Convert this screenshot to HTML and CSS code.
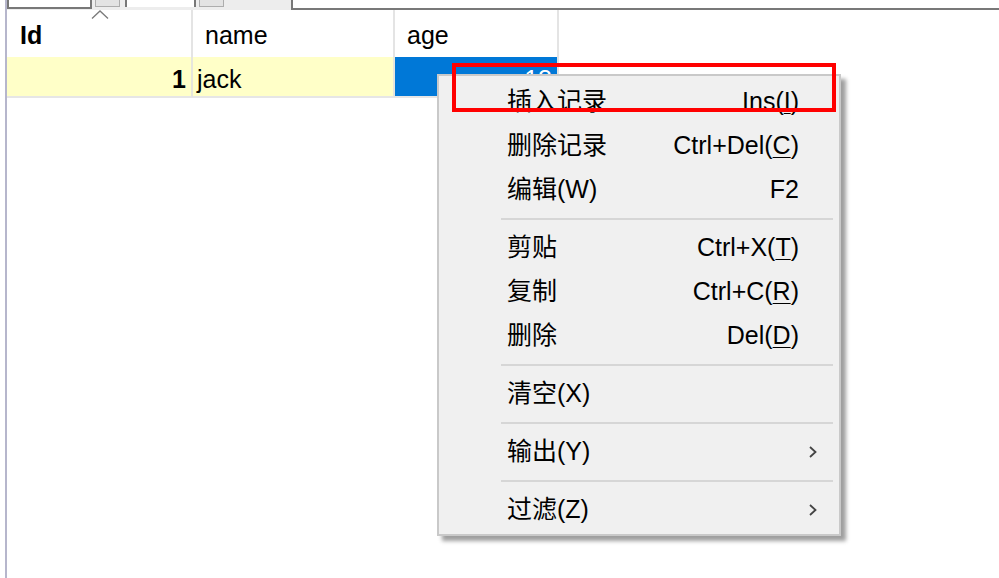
FILE: index.html
```html
<!DOCTYPE html>
<html lang="zh-CN">
<head>
<meta charset="utf-8">
<title>Grid context menu</title>
<link rel="stylesheet" href="styles.css">
</head>
<body>
<div class="screen">
  <div class="edge"></div>
  <div class="main">
    <div class="topbar">
      <div class="field field-a"></div>
      <div class="spin"></div>
      <div class="field field-c"></div>
      <div class="spin spin-d"></div>
      <div class="field field-e"></div>
    </div>
    <div class="table">
      <div class="th th-id"><span class="bold">Id</span>
        <svg class="sort" width="18" height="9" viewBox="0 0 18 9"><polyline points="1,8.5 9,1 17,8.5" fill="none" stroke="#7a7a7a" stroke-width="1.3"/></svg>
      </div>
      <div class="th">name</div>
      <div class="th">age</div>
      <div class="td num bold current">1</div>
      <div class="td current">jack</div>
      <div class="td num selected">18</div>
    </div>
  </div>

  <div class="menu">
    <div class="item"><span class="label">插入记录</span><span class="key">Ins(<u>I</u>)</span><span class="sub"></span></div>
    <div class="item"><span class="label">删除记录</span><span class="key">Ctrl+Del(<u>C</u>)</span><span class="sub"></span></div>
    <div class="item"><span class="label">编辑(W)</span><span class="key">F2</span><span class="sub"></span></div>
    <div class="sep"></div>
    <div class="item"><span class="label">剪贴</span><span class="key">Ctrl+X(<u>T</u>)</span><span class="sub"></span></div>
    <div class="item"><span class="label">复制</span><span class="key">Ctrl+C(<u>R</u>)</span><span class="sub"></span></div>
    <div class="item"><span class="label">删除</span><span class="key">Del(<u>D</u>)</span><span class="sub"></span></div>
    <div class="sep"></div>
    <div class="item"><span class="label">清空(X)</span><span class="key"></span><span class="sub"></span></div>
    <div class="sep"></div>
    <div class="item"><span class="label">输出(Y)</span><span class="key"></span><span class="sub"><svg width="10" height="12" viewBox="0 0 10 12"><polyline points="2,1 7.5,6 2,11" fill="none" stroke="#444" stroke-width="1.8"/></svg></span></div>
    <div class="sep"></div>
    <div class="item"><span class="label">过滤(Z)</span><span class="key"></span><span class="sub"><svg width="10" height="12" viewBox="0 0 10 12"><polyline points="2,1 7.5,6 2,11" fill="none" stroke="#444" stroke-width="1.8"/></svg></span></div>
  </div>

  <div class="highlight"></div>
</div>
</body>
</html>
```

FILE: styles.css
```css
* { box-sizing: border-box; }

html, body {
  margin: 0;
  padding: 0;
  background: #ffffff;
}

body {
  font-family: "Liberation Sans", "Noto Sans CJK SC", sans-serif;
  color: #000000;
}

.screen {
  position: relative;
  width: 999px;
  height: 578px;
  overflow: hidden;
  display: flex;
  background: #ffffff;
}

.edge {
  margin-left: 5px;
  width: 2px;
  height: 100%;
  background: #b6b6cc;
}

.main {
  flex: 1;
  display: flex;
  flex-direction: column;
}

/* top strip (cut-off toolbar) */
.topbar {
  display: flex;
  align-items: flex-start;
  height: 10px;
  background: #ededed;
}

.field {
  background: #ffffff;
  border: 0 solid #787878;
}

.field-a {
  width: 85px;
  height: 9px;
  border-width: 0 2px 2px 2px;
}

.spin {
  width: 25px;
  height: 7px;
  margin-left: 3px;
  background: #e3e3e3;
  border: 1px solid #adadad;
  border-top: 0;
}

.field-c {
  width: 71px;
  height: 7px;
  margin-left: 5px;
  border-width: 0 2px 0 2px;
}

.spin-d {
  margin-left: 3px;
}

.field-e {
  margin-left: auto;
  width: 708px;
  height: 10px;
  border-width: 0 0 2px 2px;
}

/* grid */
.table {
  display: grid;
  grid-template-columns: 186px 202px 164px;
  grid-template-rows: 47px 41px;
  font-size: 25px;
}

.th {
  position: relative;
  padding: 4px 0 0 12px;
  line-height: 43px;
  border-right: 2px solid #e4e4e4;
  background: #ffffff;
  white-space: nowrap;
}

.th-id {
  padding-left: 13px;
}

.sort {
  position: absolute;
  left: 84px;
  top: 0;
  display: block;
}

.td {
  padding: 6px 0 0 4px;
  line-height: 33px;
  border-right: 2px solid #e6e6dc;
  border-bottom: 2px solid #e6e6e6;
  white-space: nowrap;
}

.num {
  text-align: right;
  padding-right: 5px;
}

.bold { font-weight: bold; }

.current {
  background: #ffffc8;
}

.selected {
  background: #0078d7;
  color: #ffffff;
  border-right-color: #e4e4e4;
}

/* context menu */
.menu {
  position: absolute;
  left: 437px;
  top: 74px;
  width: 404px;
  height: 462px;
  padding: 4px 2px 2px 2px;
  background: #f0f0f0;
  border: 2px solid #c9c9c9;
  box-shadow: 5px 5px 4px rgba(0, 0, 0, 0.38);
  font-size: 25px;
  display: flex;
  flex-direction: column;
}

.item {
  display: flex;
  align-items: center;
  height: 44px;
  padding-left: 66px;
  white-space: nowrap;
}

.label {
  flex: 1;
  line-height: 44px;
  position: relative;
  top: -1px;
}

.key {
  line-height: 44px;
  position: relative;
  top: -1px;
}

.key u {
  text-decoration-thickness: 1px;
  text-underline-offset: 3px;
}

.sub {
  width: 38px;
  display: flex;
  justify-content: flex-end;
  padding-right: 19px;
  align-items: center;
}

.sub svg { display: block; }

.sep {
  height: 2px;
  margin: 6px 4px 6px 60px;
  background: #d6d6d6;
  flex: none;
}

/* annotation */
.highlight {
  position: absolute;
  left: 452px;
  top: 63px;
  width: 384px;
  height: 49px;
  border: 4px solid #ff0000;
}
```
